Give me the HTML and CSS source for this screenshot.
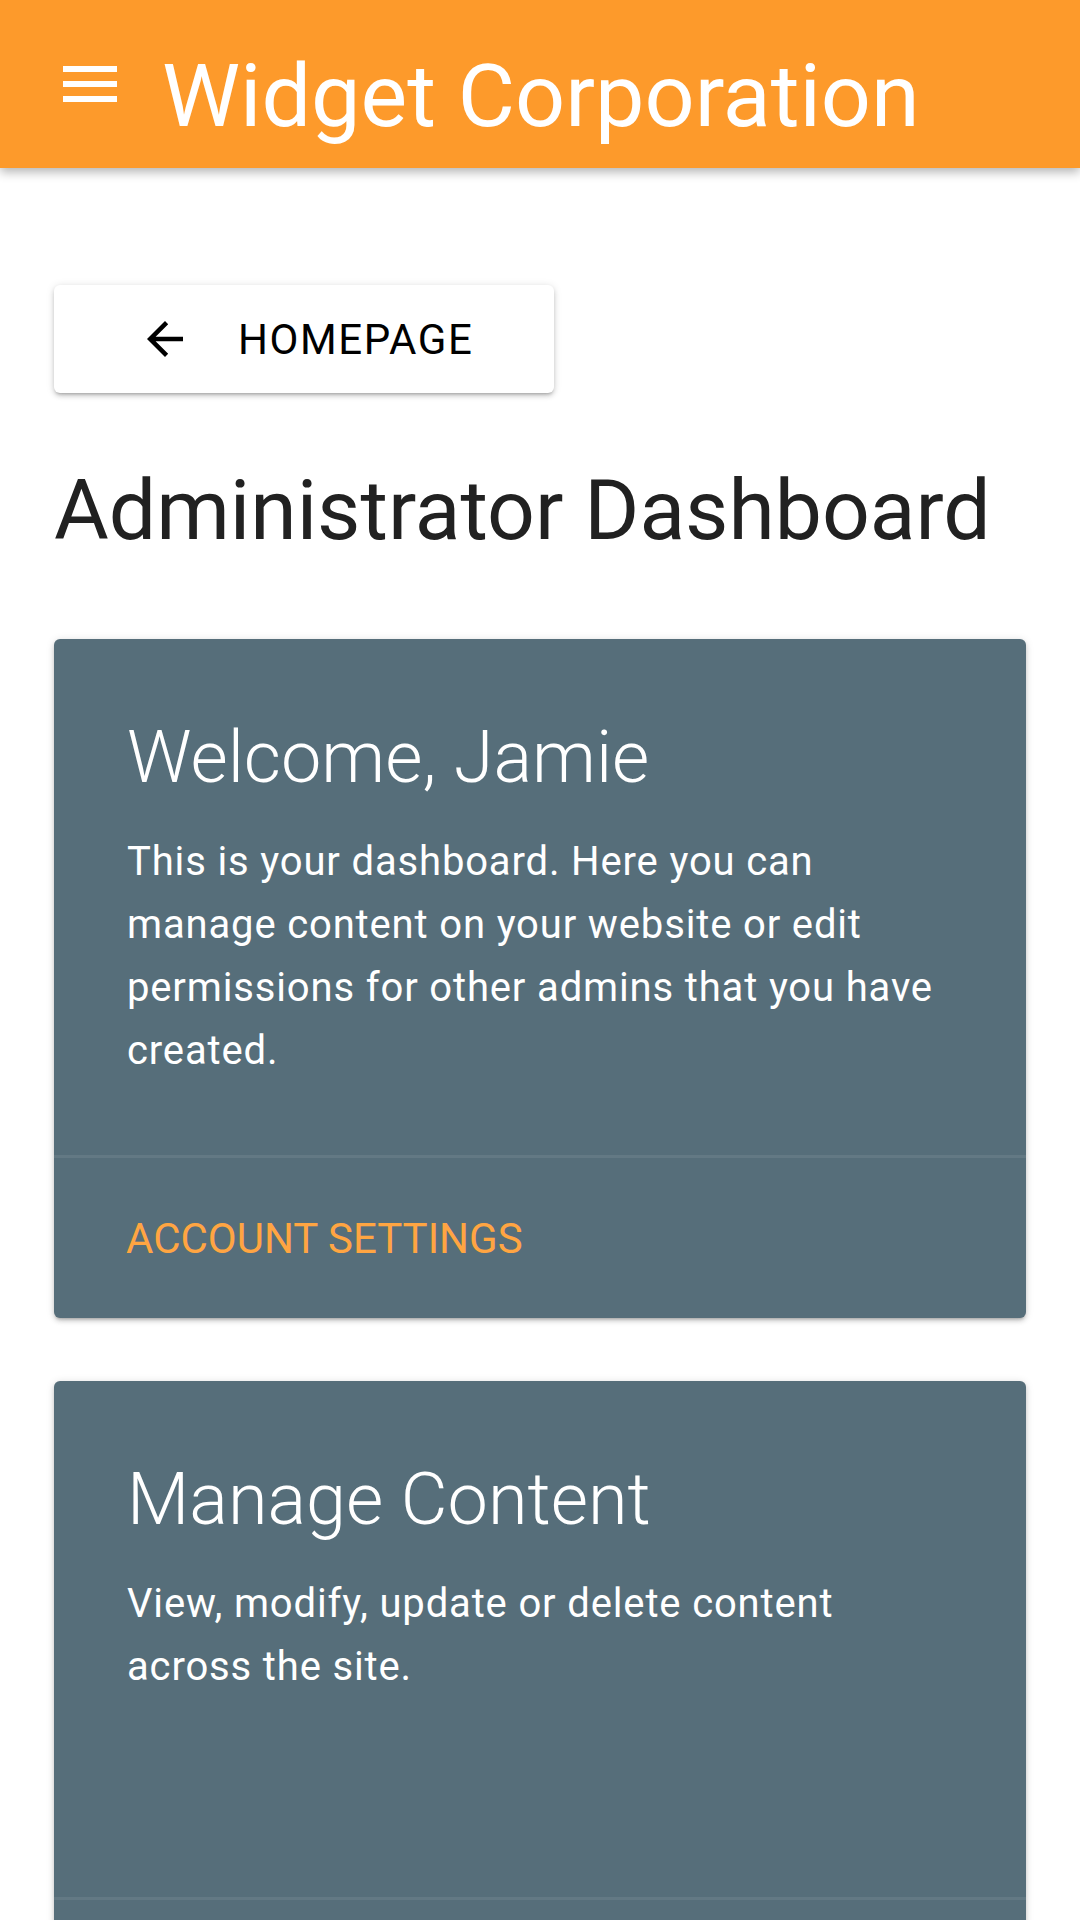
FILE: index.html
```html
<!DOCTYPE html>
<html lang="en">
<head>
<meta charset="utf-8">
<title>Widget Corporation</title>
<link rel="stylesheet" href="styles.css">
</head>
<body>
<header class="appbar">
  <svg class="menu-icon" viewBox="0 0 24 24" width="72" height="72"><path fill="#fff" d="M3 18h18v-2H3v2zm0-5h18v-2H3v2zm0-7v2h18V6H3z"/></svg>
  <span class="appbar-title">Widget Corporation</span>
</header>
<main class="content">
  <a class="back-btn" href="#">
    <svg class="back-icon" viewBox="0 0 24 24" width="54" height="54"><path fill="#000" d="M20 11H7.83l5.59-5.59L12 4l-8 8 8 8 1.41-1.41L7.83 13H20v-2z"/></svg>
    <span class="back-label">HOMEPAGE</span>
  </a>
  <h1 class="page-title">Administrator Dashboard</h1>
  <section class="card">
    <div class="card-primary">
      <h2 class="card-title">Welcome, Jamie</h2>
      <p class="card-text">This is your dashboard. Here you can manage content on your website or edit permissions for other admins that you have created.</p>
    </div>
    <div class="card-actions"><span class="card-action">ACCOUNT SETTINGS</span></div>
  </section>
  <section class="card">
    <div class="card-primary">
      <h2 class="card-title">Manage Content</h2>
      <p class="card-text">View, modify, update or delete content across the site.</p>
    </div>
    <div class="card-actions"><span class="card-action">MANAGE CONTENT</span></div>
  </section>
</main>
</body>
</html>
```
FILE: styles.css
```css
html, body {
  margin: 0;
  padding: 0;
  background: #ffffff;
  font-family: Roboto, "Noto Sans", "Liberation Sans", sans-serif;
  overflow: hidden;
}
.appbar {
  height: 168px;
  background: #fd9a2b;
  display: flex;
  align-items: center;
  padding-left: 54px;
  box-shadow: 0 4px 10px rgba(0, 0, 0, 0.3);
  position: relative;
  z-index: 2;
}
.menu-icon {
  display: block;
  flex: none;
}
.appbar-title {
  margin-left: 36px;
  margin-top: 24px;
  font-size: 88px;
  line-height: 88px;
  color: #fff;
  font-weight: 400;
}
.content {
  padding: 117px 54px 0;
}
.back-btn {
  display: flex;
  align-items: center;
  box-sizing: border-box;
  width: 500px;
  height: 108px;
  padding-left: 84px;
  gap: 46px;
  background: #fff;
  border-radius: 6px;
  box-shadow: 0 3px 3px -2px rgba(0,0,0,0.2), 0 3px 5px 0 rgba(0,0,0,0.14), 0 1px 9px 0 rgba(0,0,0,0.12);
  text-decoration: none;
  color: #000;
}
.back-icon { display: block; flex: none; }
.back-label {
  font-size: 42px;
  letter-spacing: 1.6px;
  font-weight: 400;
}
.page-title {
  margin: 68px 0 78px;
  font-size: 84px;
  line-height: 100px;
  font-weight: 400;
  color: #212121;
}
.card {
  background: #566e7a;
  border-radius: 6px;
  margin-bottom: 63px;
  box-shadow: 0 3px 3px -2px rgba(0,0,0,0.2), 0 3px 5px 0 rgba(0,0,0,0.14), 0 1px 9px 0 rgba(0,0,0,0.12);
  overflow: hidden;
}
.card-primary {
  box-sizing: border-box;
  min-height: 516px;
  padding: 76px 73px 64px;
}
.card-title {
  margin: 0 0 29px;
  font-size: 72px;
  line-height: 86px;
  font-weight: 300;
  color: #fff;
}
.card-text {
  margin: 0;
  font-size: 40px;
  line-height: 63px;
  letter-spacing: 0.85px;
  color: #fff;
}
.card-actions {
  height: 160px;
  border-top: 3px solid rgba(255,255,255,0.08);
  display: flex;
  align-items: center;
  padding-left: 72px;
}
.card-action {
  font-size: 42px;
  color: #ffa542;
  letter-spacing: 0;
}
```
